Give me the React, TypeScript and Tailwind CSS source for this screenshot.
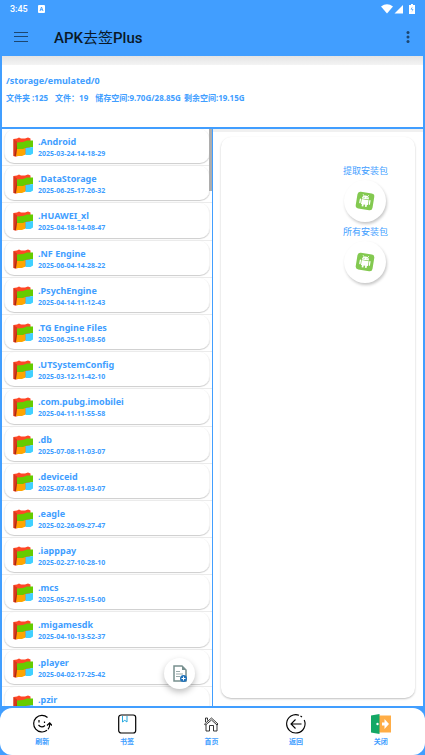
import React from "react";

const folders: { name: string; date?: string }[] = [
  { name: ".Android", date: "2025-03-24-14-18-29" },
  { name: ".DataStorage", date: "2025-06-25-17-26-32" },
  { name: ".HUAWEI_xl", date: "2025-04-18-14-08-47" },
  { name: ".NF Engine", date: "2025-06-04-14-28-22" },
  { name: ".PsychEngine", date: "2025-04-14-11-12-43" },
  { name: ".TG Engine Files", date: "2025-06-25-11-08-56" },
  { name: ".UTSystemConfig", date: "2025-03-12-11-42-10" },
  { name: ".com.pubg.imobilei", date: "2025-04-11-11-55-58" },
  { name: ".db", date: "2025-07-08-11-03-07" },
  { name: ".deviceid", date: "2025-07-08-11-03-07" },
  { name: ".eagle", date: "2025-02-26-09-27-47" },
  { name: ".iapppay", date: "2025-02-27-10-28-10" },
  { name: ".mcs", date: "2025-05-27-15-15-00" },
  { name: ".migamesdk", date: "2025-04-10-13-52-37" },
  { name: ".player", date: "2025-04-02-17-25-42" },
  { name: ".pzir" },
];

function FolderIcon() {
  return (
    <svg viewBox="0 0 20 20" className="size-5 shrink-0" aria-hidden="true">
      <path d="M0.500 2 4 1.500 6 .5l2 1h4l3-1 2.500 1V16L3 19.500.5 19z" fill="#ff4726" />
      <path d="M.5 2 4 4.500V14l-1 5.500L.5 19z" fill="#d83a1c" />
      <path d="M4 5.500 10 5l4-1.500h6V10l-6 .5-4 1.500H4z" fill="#66cc00" />
      <path d="M4 12h6l2.500-1v6.500L9 19H3z" fill="#ffa500" />
      <path d="M12.500 11l7.500-1v6.500l-2.500 1.500h-5z" fill="#40d0ff" />
      <path d="M4 7 3 19H1.500z" fill="#a82a12" />
    </svg>
  );
}

function StatusBar() {
  return (
    <div className="flex h-[18px] items-center justify-between px-[10px] text-white">
      <div className="flex items-center gap-[10px]">
        <span className="font-['Roboto',sans-serif] text-[9px] font-medium leading-[18px]">3:45</span>
        <svg viewBox="0 0 7 8" className="h-2 w-[7px]" aria-hidden="true">
          <rect width="7" height="8" rx="1" fill="#fff" />
          <path d="M2 6 3.500 2 5 6M2.500 4.700h2" fill="none" stroke="#419eff" strokeWidth="0.900" />
        </svg>
      </div>
      <svg viewBox="0 0 34 10" className="h-[10px] w-[34px]" aria-hidden="true">
        <path d="M0 2.500Q6-2 12 2.500L6 9.500z" fill="#fff" />
        <path d="M22 1v8.500h-8.500z" fill="#fff" />
        <path d="M30 0h2v1h2v9h-6V1h2z" fill="#fff" />
        <path d="M31.500 2.500 29.500 5.500h2L30.500 8.500l2-3.500h-1.500z" fill="#419eff" />
      </svg>
    </div>
  );
}

function AppBar() {
  return (
    <div className="flex h-[38px] items-center px-[14px] pr-[15px]">
      <button aria-label="菜单" className="mr-[26px] block">
        <svg viewBox="0 0 14 10" className="h-[10px] w-[14px]" stroke="#1c4670" strokeWidth="1" aria-hidden="true">
          <path d="M0 .5h14M0 4.500h14M0 9.500h14" />
        </svg>
      </button>
      <h1 className="flex-1 pt-[2px] font-['Roboto','Noto_Sans_CJK_SC',sans-serif] text-[15px] font-medium leading-5 text-[#0a1826]">
        APK<span className="font-normal">去签</span>Plus
      </h1>
      <button aria-label="更多选项" className="block">
        <svg viewBox="0 0 4 12" className="h-3 w-1" fill="#1c4670" aria-hidden="true">
          <circle cx="2" cy="1.500" r="1.500" />
          <circle cx="2" cy="6" r="1.500" />
          <circle cx="2" cy="10.500" r="1.500" />
        </svg>
      </button>
    </div>
  );
}

function FolderRow({ name, date }: { name: string; date?: string }) {
  return (
    <li className="min-h-0 border-b border-[#ebebeb] px-[2px] pb-[2px]">
      <button className="flex h-full w-full items-start gap-[5px] rounded-[10px] border-x border-[#f4f4f4] bg-white pl-2 pt-[7px] text-left shadow-[0_1px_1px_rgba(0,0,0,0.2)]">
        <span className="block pt-px">
          <FolderIcon />
        </span>
        <span className="block font-bold text-[#419eff]">
          <span className="block text-[9px] leading-3">{name}</span>
          {date && <span className="block text-[7px] leading-3">{date}</span>}
        </span>
      </button>
    </li>
  );
}

function AndroidAction({ label }: { label: string }) {
  return (
    <button className="flex flex-col items-center">
      <span className="text-[9px] leading-[18px] text-[#419eff]">{label}</span>
      <span className="mb-px flex size-[42px] items-center justify-center rounded-full bg-white shadow-[1px_2px_3px_rgba(0,0,0,0.22)]">
        <svg viewBox="0 0 20 20" className="size-5" aria-hidden="true">
          <g transform="rotate(9 10 10)">
            <rect x="1.500" y="1.500" width="17" height="17" rx="3" fill="#83c950" />
            <path d="M6.500 8a3.500 3.500 0 0 1 7 0z" fill="#fff" />
            <path d="m7 3.500 1.500 2M13 3.500l-1.500 2" stroke="#fff" strokeWidth="0.700" />
            <path d="M6.500 8.600h7v5h-1v2.200h-1.700v-2.200H9.200v2.200H7.500v-2.200h-1z" fill="#fff" />
            <path d="M5.200 9v3.500M14.800 9v3.500" stroke="#fff" strokeWidth="1.300" strokeLinecap="round" />
            <circle cx="8.500" cy="6.500" r=".5" fill="#83c950" />
            <circle cx="11.500" cy="6.500" r=".5" fill="#83c950" />
          </g>
        </svg>
      </span>
    </button>
  );
}

function RefreshIcon() {
  return (
    <svg viewBox="0 0 20 20" className="size-5" fill="none" stroke="#000" strokeWidth="1.200" aria-hidden="true">
      <path d="M15.500 3.500A8.300 8.300 0 1 0 15 16.300" />
      <path d="M16 15.300Q18 13 17.700 9.500M15 11.500l2.700-2.700L20 11.500" />
      <path d="M7 6v2.500M12.500 7.500v1.500M6.500 11q3 3.500 6.500 .5" />
    </svg>
  );
}

function BookmarkIcon() {
  return (
    <svg viewBox="0 0 20 20" className="size-5" fill="none" aria-hidden="true">
      <rect x="1.700" y="1" width="17" height="18" rx="2.500" stroke="#000" strokeWidth="1.200" />
      <path d="M5.500 2v6l2.300-1.700L10 8V2" stroke="#27a9e0" strokeWidth="1" />
    </svg>
  );
}

function HomeIcon() {
  return (
    <svg viewBox="0 0 20 20" className="size-5" fill="none" stroke="#222" strokeWidth="0.900" aria-hidden="true">
      <path d="M3.500 10 10.500 4l6.500 6-1 1-5.500-5-6 5zM4.500 8V4h2v2.500M5 10.500V17h3.500v-5.500h4V17H16v-6.500" />
    </svg>
  );
}

function BackIcon() {
  return (
    <svg viewBox="0 0 20 20" className="size-5" fill="none" stroke="#000" strokeWidth="1.100" aria-hidden="true">
      <path d="M13 1.200A9.200 9.200 0 1 0 18.200 6M14.500 2l1.500 1" />
      <path d="M15.500 10H5.500M9.500 5.500 5 10l4.500 4.500" />
    </svg>
  );
}

function ExitIcon() {
  return (
    <svg viewBox="0 0 20 20" className="size-5" aria-hidden="true">
      <path d="M8 1.500h12v17H8z" fill="#ffad46" />
      <path d="M0 1.500 8.500 0v20L0 18.500z" fill="#14a866" />
      <circle cx="6.500" cy="10" r="1.200" fill="#fff" />
      <path d="M11 8.500h2.500V5l4.500 5-4.500 5v-3.500H11z" fill="#fff" />
    </svg>
  );
}

const navItems = [
  { label: "刷新", Icon: RefreshIcon },
  { label: "书签", Icon: BookmarkIcon },
  { label: "首页", Icon: HomeIcon },
  { label: "返回", Icon: BackIcon },
  { label: "关闭", Icon: ExitIcon },
];

export default function App() {
  return (
    <div className="flex h-screen flex-col overflow-hidden bg-[#419eff] font-['Noto_Sans','Noto_Sans_CJK_SC',sans-serif]">
      <header className="shrink-0">
        <StatusBar />
        <AppBar />
      </header>

      <main className="flex min-h-0 flex-1 flex-col px-[2px]">
        <section className="h-[71px] shrink-0 bg-white font-bold text-[#419eff]">
          <div className="h-[9px] bg-linear-to-b from-[#e4e4e4] to-[#f4f4f4]" />
          <p className="px-1 pt-[10px] text-[9px] leading-3">/storage/emulated/0</p>
          <p className="flex whitespace-pre px-1 pt-[5px] text-[8px] leading-3">
            <span className="mr-[7px]">文件夹 :125</span>
            <span className="mr-[7px]">文件：19</span>
            <span className="mr-[3px]">储存空间:9.70G/28.85G</span>
            <span>剩余空间:19.15G</span>
          </p>
        </section>

        <div className="mt-[2px] flex min-h-0 flex-1 gap-px">
          <section className="relative min-w-0 flex-1 overflow-hidden bg-white">
            <ul className="grid h-[595px] grid-rows-[repeat(16,minmax(0,1fr))]">
              {folders.map((f) => (
                <FolderRow key={f.name} name={f.name} date={f.date} />
              ))}
            </ul>
            <div className="absolute right-0 top-0 h-[62px] w-[3px] bg-[#adadad]" />
            <button
              aria-label="新建文件"
              className="absolute bottom-[17px] right-[17px] flex size-[31px] items-center justify-center rounded-full bg-white shadow-[0_3px_6px_rgba(0,0,0,0.25)]"
            >
              <svg viewBox="0 0 14 18" className="h-[18px] w-[14px]" fill="none" aria-hidden="true">
                <path d="M1 1h8l4 4v11H1z" fill="#fff" stroke="#78908f" strokeWidth="1.500" />
                <path d="M9 1v4h4z" fill="#78908f" />
                <path d="M3 6.500h4M3 9h7M3 11.500h4" stroke="#9aabaa" strokeWidth="1" />
                <circle cx="10.500" cy="13.500" r="3.500" fill="#2272b9" />
                <path d="M8.500 13.500h4M10.500 11.500v4" stroke="#fff" strokeWidth="1" />
              </svg>
            </button>
          </section>

          <section className="flex min-w-0 flex-1 flex-col bg-white">
            <div className="h-[3px] shrink-0 bg-[#f0f0f0]" />
            <div className="mx-2 mb-2 mt-[5px] flex flex-1 flex-col items-end rounded-[10px] bg-white pr-[27px] pt-[25px] shadow-[0_1px_2px_rgba(0,0,0,0.25)]">
              <AndroidAction label="提取安装包" />
              <AndroidAction label="所有安装包" />
            </div>
          </section>
        </div>
      </main>

      <nav className="mt-[2px] grid h-[47px] shrink-0 grid-cols-5 rounded-xl bg-white pr-[2px]">
        {navItems.map(({ label, Icon }) => (
          <button key={label} className="flex flex-col items-center pt-[6px]">
            <Icon />
            <span className="mt-[2px] text-[7px] font-bold leading-3 text-[#419eff]">{label}</span>
          </button>
        ))}
      </nav>
    </div>
  );
}
